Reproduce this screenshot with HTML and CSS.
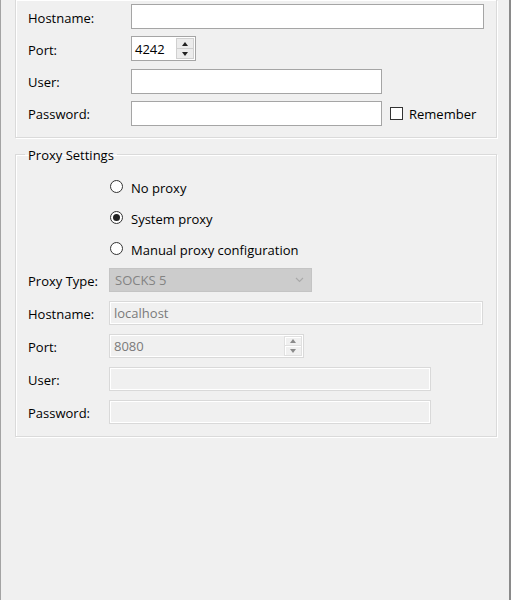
FILE: index.html
```html
<!DOCTYPE html>
<html>
<head>
<meta charset="utf-8">
<link rel="stylesheet" href="styles.css">
</head>
<body>
<div class="window">
  <div class="group group-top">
    <div class="form form-a">
      <label class="lbl">Hostname:</label>
      <div class="field"><span class="input w-full"></span></div>

      <label class="lbl">Port:</label>
      <div class="field">
        <span class="spin spin-a">
          <span class="spin-val">4242</span>
          <span class="spin-btns">
            <span class="sb sb-up"><span class="tri up"></span></span>
            <span class="sb sb-down"><span class="tri down"></span></span>
          </span>
        </span>
      </div>

      <label class="lbl">User:</label>
      <div class="field"><span class="input w-user"></span></div>

      <label class="lbl">Password:</label>
      <div class="field">
        <span class="input w-user"></span>
        <span class="check"></span>
        <span class="check-text">Remember</span>
      </div>
    </div>
  </div>

  <fieldset class="group group-proxy">
    <legend class="legend">Proxy Settings</legend>
    <div class="radios">
      <div class="radio-row"><span class="radio"></span><span class="radio-text">No proxy</span></div>
      <div class="radio-row"><span class="radio checked"></span><span class="radio-text">System proxy</span></div>
      <div class="radio-row"><span class="radio"></span><span class="radio-text">Manual proxy configuration</span></div>
    </div>
    <div class="form form-b">
      <label class="lbl">Proxy Type:</label>
      <div class="field">
        <span class="combo">
          <span class="combo-text">SOCKS 5</span>
          <svg class="chev" width="9" height="6" viewBox="0 0 9 6"><path d="M1 1 L4.5 4.5 L8 1" fill="none" stroke="#a9a9a9" stroke-width="1.1"/></svg>
        </span>
      </div>

      <label class="lbl">Hostname:</label>
      <div class="field"><span class="input dis w-host2"><span class="dis-text">localhost</span></span></div>

      <label class="lbl">Port:</label>
      <div class="field">
        <span class="spin dis spin-b">
          <span class="spin-val dis-text">8080</span>
          <span class="spin-btns dis-btns">
            <span class="sb sb-up"><span class="tri up"></span></span>
            <span class="sb sb-down"><span class="tri down"></span></span>
          </span>
        </span>
      </div>

      <label class="lbl">User:</label>
      <div class="field"><span class="input dis w-user2"></span></div>

      <label class="lbl">Password:</label>
      <div class="field"><span class="input dis w-user2"></span></div>
    </div>
  </fieldset>
</div>
</body>
</html>
```

FILE: styles.css
```css
html, body {
  margin: 0;
  padding: 0;
  background: #f0f0f0;
}

body {
  font-family: "Open Sans", "Noto Sans", "Liberation Sans", sans-serif;
  font-size: 13px;
  color: #000;
}

.window {
  box-sizing: border-box;
  width: 511px;
  height: 600px;
  border-left: 1px solid #a3a3a3;
  border-right: 2px solid #8a8a8a;
  overflow: hidden;
}

.group {
  box-sizing: border-box;
  width: 482px;
  margin-left: 14px;
  border: 1px solid #dadada;
  box-shadow: 1px 1px 0 #ffffff, inset 1px 1px 0 #ffffff;
}

.group-top {
  border-top: none;
  padding: 4px 12px 11px 12px;
}

.form {
  display: grid;
  align-items: center;
}

.form-a {
  grid-template-columns: 103px 1fr;
  row-gap: 7.3px;
}

.form-b {
  grid-template-columns: 81px 1fr;
  row-gap: 9px;
}

.lbl {
  line-height: 18px;
  padding-top: 2px;
  white-space: nowrap;
}

.field {
  display: flex;
  align-items: center;
}

.input {
  box-sizing: border-box;
  display: flex;
  align-items: center;
  height: 25px;
  background: #fff;
  border: 1px solid #a5a5a5;
}

.w-full { width: 353px; }
.w-user { width: 251px; }

.check {
  box-sizing: border-box;
  width: 13px;
  height: 13px;
  margin-left: 8px;
  border: 1px solid #333;
  background: #fff;
}

.check-text {
  margin-left: 6px;
  line-height: 18px;
  padding-top: 2px;
}

.spin {
  box-sizing: border-box;
  display: flex;
  align-items: stretch;
  height: 25px;
  background: #fff;
  border: 1px solid #a5a5a5;
}

.spin-a { width: 65px; }
.spin-b { width: 195px; }

.spin-val {
  flex: 1;
  display: flex;
  align-items: center;
  padding-left: 3px;
  padding-top: 1px;
}

.spin-btns {
  display: flex;
  flex-direction: column;
  width: 18px;
  margin: 1px 1px 1px 0;
}

.sb {
  flex: 1;
  display: flex;
  align-items: center;
  justify-content: center;
  background: #ececec;
  border: 1px solid #d0d0d0;
}

.sb-down { border-top: none; }

.tri {
  width: 0;
  height: 0;
  border-left: 3px solid transparent;
  border-right: 3px solid transparent;
}

.tri.up { border-bottom: 4px solid #222; }
.tri.down { border-top: 4px solid #222; }

/* proxy group */
.group-proxy {
  margin: 8px 0 0 14px;
  padding: 14px 12px 12px 12px;
  min-inline-size: 0;
}

.legend {
  padding: 0 3px;
  margin-left: -3px;
  line-height: 18px;
}

.radios {
  display: flex;
  flex-direction: column;
  gap: 13px;
  padding-left: 82px;
  margin-bottom: 10px;
}

.radio-row {
  display: flex;
  align-items: center;
  gap: 8px;
  height: 18px;
}

.radio-text {
  line-height: 18px;
  padding-top: 2px;
}

.radio {
  box-sizing: border-box;
  width: 13px;
  height: 13px;
  border-radius: 50%;
  border: 1px solid #333;
  background: #fff;
  display: flex;
  align-items: center;
  justify-content: center;
}

.radio.checked::after {
  content: "";
  width: 7px;
  height: 7px;
  border-radius: 50%;
  background: #222;
}

.combo {
  box-sizing: border-box;
  width: 203px;
  height: 24px;
  display: flex;
  align-items: center;
  justify-content: space-between;
  background: #cccccc;
  border: 1px solid #c4c4c4;
  padding: 0 7px 0 5px;
}

.combo-text {
  color: #838383;
  padding-top: 1px;
}

.chev { display: block; }

.input.dis, .spin.dis {
  height: 24px;
  background: #f0f0f0;
  border: 1px solid #d9d9d9;
  box-shadow: inset 1px 1px 0 #fff, inset -1px -1px 0 #fff;
}

.dis-text {
  color: #7a7a7a;
  padding-left: 4px;
  padding-top: 1px;
}

.w-host2 { width: 374px; }
.w-user2 { width: 322px; }

.dis-btns .sb {
  background: #f0f0f0;
  border-color: #e0e0e0;
  box-shadow: inset 1px 1px 0 #fff;
}

.dis-btns .tri.up { border-bottom-color: #8a8a8a; }
.dis-btns .tri.down { border-top-color: #8a8a8a; }
```
